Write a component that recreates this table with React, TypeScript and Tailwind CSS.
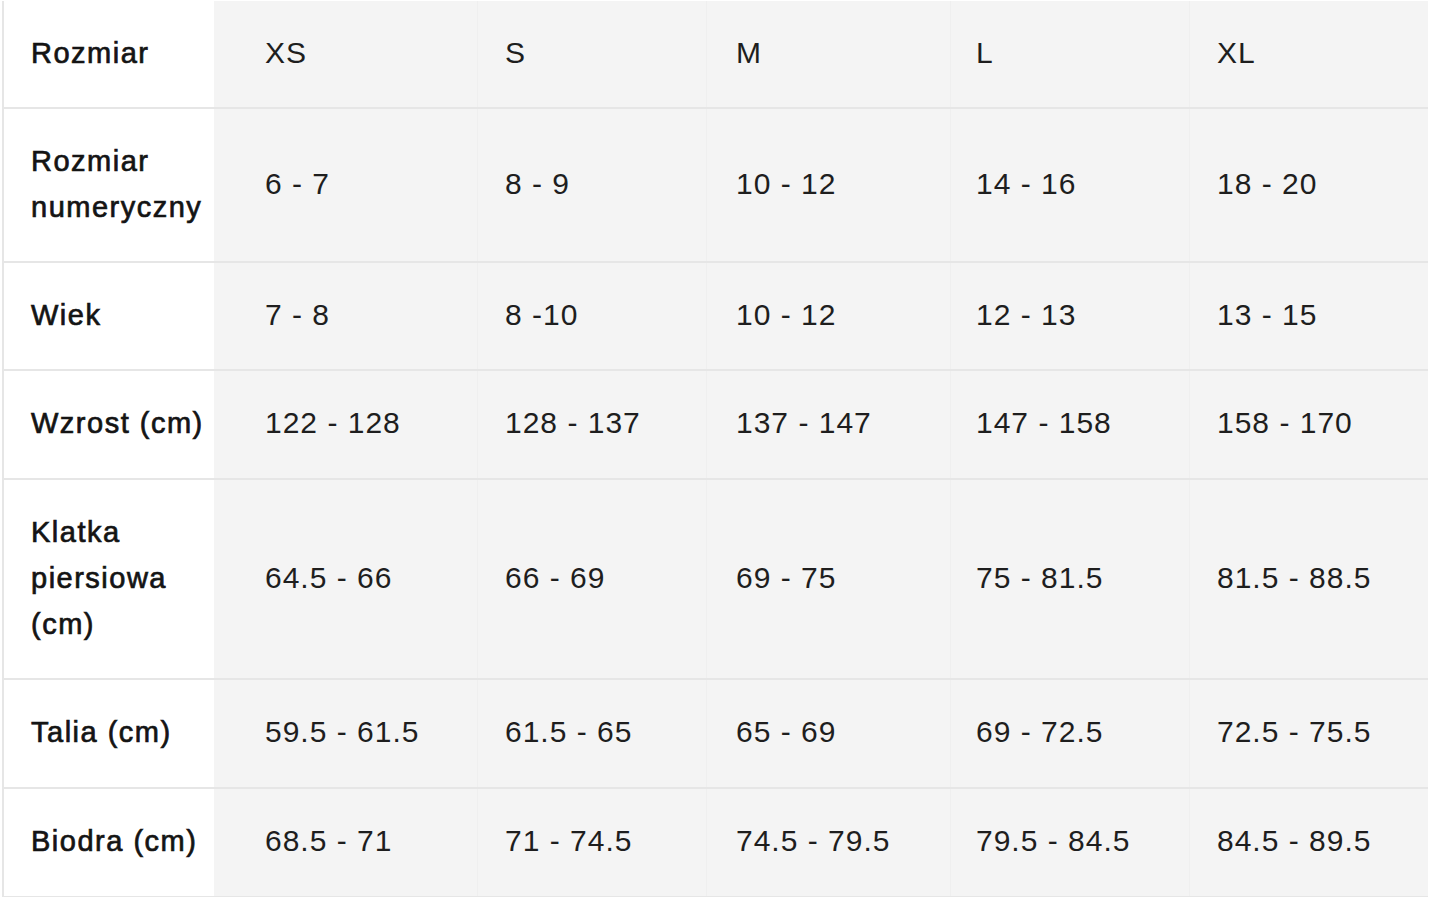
import React from "react";

const sizes = ["XS", "S", "M", "L", "XL"];

const rows: { label: string[]; values: string[]; extra?: boolean }[] = [
  { label: ["Rozmiar", "numeryczny"], values: ["6 - 7", "8 - 9", "10 - 12", "14 - 16", "18 - 20"] },
  { label: ["Wiek"], values: ["7 - 8", "8 -10", "10 - 12", "12 - 13", "13 - 15"] },
  { label: ["Wzrost (cm)"], values: ["122 - 128", "128 - 137", "137 - 147", "147 - 158", "158 - 170"], extra: true },
  { label: ["Klatka", "piersiowa", "(cm)"], values: ["64.5 - 66", "66 - 69", "69 - 75", "75 - 81.5", "81.5 - 88.5"] },
  { label: ["Talia (cm)"], values: ["59.5 - 61.5", "61.5 - 65", "65 - 69", "69 - 72.5", "72.5 - 75.5"], extra: true },
  { label: ["Biodra (cm)"], values: ["68.5 - 71", "71 - 74.5", "74.5 - 79.5", "79.5 - 84.5", "84.5 - 89.5"], extra: true },
];

const colPad = ["pl-[51px]", "pl-[27px]", "pl-[29px]", "pl-[25px]", "pl-[27px]"];

function Row({ label, values, extra }: { label: string[]; values: string[]; extra?: boolean }) {
  const py = extra ? "pt-[29px] pb-[32px]" : "pt-[29px] pb-[31px]";
  return (
    <div className="grid grid-cols-[210px_263px_229px_244px_239px_239px] border-b-2 border-[#e6e6e6]">
      <div
        className={`bg-white pl-[27px] ${py} flex flex-col justify-center text-[29px] leading-[46px] font-normal text-[#141414] tracking-[1.5px] [-webkit-text-stroke:0.7px_#141414]`}
      >
        {label.map((l) => (
          <span key={l}>{l}</span>
        ))}
      </div>
      {values.map((v, i) => (
        <div
          key={i}
          className={`bg-[#f4f4f4] ${colPad[i]} ${py} flex items-center text-[30px] leading-[46px] text-[#1e1e1e] tracking-[1px] ${i > 0 ? "border-l border-[#efefef]" : ""}`}
        >
          {v}
        </div>
      ))}
    </div>
  );
}

export default function App() {
  return (
    <div
      className="w-[1430px] h-[897px] bg-white pl-[2px] pt-[1px] overflow-hidden"
      style={{ fontFamily: '"Liberation Sans", Arial, sans-serif' }}
    >
      <div className="w-[1426px] border-l-2 border-[#e6e6e6]">
        <Row label={["Rozmiar"]} values={sizes} />
        {rows.map((r, i) => (
          <Row key={i} label={r.label} values={r.values} extra={r.extra} />
        ))}
      </div>
    </div>
  );
}
